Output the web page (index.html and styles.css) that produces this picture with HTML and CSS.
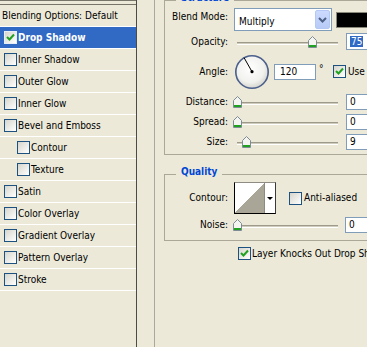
FILE: index.html
```html
<!DOCTYPE html>
<html lang="en">
<head>
  <meta charset="UTF-8">
  <title>Layer Style</title>
  <link rel="stylesheet" href="styles.css">
</head>
<body>
<div class="dialog">

  <!-- Styles list -->
  <aside class="styles">
    <div class="styles-top"></div>
    <div class="item head">Blending Options: Default</div>
    <div class="item selected">
      <span class="cb"><svg width="11" height="11" viewBox="0 0 11 11"><path d="M2 5 L4.5 7.5 L9 2.5" fill="none" stroke="#21A121" stroke-width="2"/></svg></span>Drop Shadow
    </div>
    <div class="item"><span class="cb"></span>Inner Shadow</div>
    <div class="item"><span class="cb"></span>Outer Glow</div>
    <div class="item"><span class="cb"></span>Inner Glow</div>
    <div class="item"><span class="cb"></span>Bevel and Emboss</div>
    <div class="item sub"><span class="cb"></span>Contour</div>
    <div class="item sub"><span class="cb"></span>Texture</div>
    <div class="item"><span class="cb"></span>Satin</div>
    <div class="item"><span class="cb"></span>Color Overlay</div>
    <div class="item"><span class="cb"></span>Gradient Overlay</div>
    <div class="item"><span class="cb"></span>Pattern Overlay</div>
    <div class="item"><span class="cb"></span>Stroke</div>
  </aside>

  <!-- Settings -->
  <main class="panel">
    <div class="outer">

      <section class="group structure">
        <div class="group-title">Structure</div>

        <div class="row blend">
          <span class="label">Blend Mode:</span>
          <div class="select">
            <span class="select-text">Multiply</span>
            <span class="select-btn"><svg width="9" height="6" viewBox="0 0 9 6"><path d="M1 1 L4.5 4.5 L8 1" fill="none" stroke="#4D6185" stroke-width="2"/></svg></span>
          </div>
          <span class="swatch"></span>
        </div>

        <div class="row opacity">
          <span class="label">Opacity:</span>
          <div class="slider">
            <div class="track"></div>
            <svg class="thumb" style="left:71px" width="9" height="12" viewBox="0 0 9 12"><path d="M0.5 4.5 L4.5 0.5 L8.5 4.5 V11.5 H0.5 Z" fill="#F4F4F0" stroke="#7E8C96"/><rect x="1" y="9" width="7" height="2" fill="#21A121"/></svg>
          </div>
          <div class="num"><span class="sel">75</span></div>
        </div>

        <div class="row angle">
          <span class="label">Angle:</span>
          <svg class="dial" width="36" height="36" viewBox="0 0 36 36">
            <defs>
              <radialGradient id="dialFill" cx="45%" cy="40%" r="60%">
                <stop offset="0" stop-color="#FFFFFF"/>
                <stop offset="0.7" stop-color="#F1F1EE"/>
                <stop offset="1" stop-color="#D6D5CE"/>
              </radialGradient>
            </defs>
            <circle cx="18" cy="18" r="16.2" fill="url(#dialFill)" stroke="#4A5F8C" stroke-width="1.6"/>
            <line x1="18" y1="17.7" x2="10" y2="3.6" stroke="#000" stroke-width="1"/>
            <circle cx="18" cy="17.7" r="1.6" fill="#000"/>
          </svg>
          <div class="num angle-num">120</div>
          <span class="deg">°</span>
          <span class="cb use-cb"><svg width="11" height="11" viewBox="0 0 11 11"><path d="M2 5 L4.5 7.5 L9 2.5" fill="none" stroke="#21A121" stroke-width="2"/></svg></span>
          <span class="cb-text">Use Global Light</span>
        </div>

        <div class="row slide first">
          <span class="label">Distance:</span>
          <div class="slider">
            <div class="track"></div>
            <svg class="thumb" style="left:-4px" width="9" height="12" viewBox="0 0 9 12"><path d="M0.5 4.5 L4.5 0.5 L8.5 4.5 V11.5 H0.5 Z" fill="#F4F4F0" stroke="#7E8C96"/><rect x="1" y="9" width="7" height="2" fill="#21A121"/></svg>
          </div>
          <div class="num">0</div>
        </div>

        <div class="row slide">
          <span class="label">Spread:</span>
          <div class="slider">
            <div class="track"></div>
            <svg class="thumb" style="left:-4px" width="9" height="12" viewBox="0 0 9 12"><path d="M0.5 4.5 L4.5 0.5 L8.5 4.5 V11.5 H0.5 Z" fill="#F4F4F0" stroke="#7E8C96"/><rect x="1" y="9" width="7" height="2" fill="#21A121"/></svg>
          </div>
          <div class="num">0</div>
        </div>

        <div class="row slide">
          <span class="label">Size:</span>
          <div class="slider">
            <div class="track"></div>
            <svg class="thumb" style="left:5px" width="9" height="12" viewBox="0 0 9 12"><path d="M0.5 4.5 L4.5 0.5 L8.5 4.5 V11.5 H0.5 Z" fill="#F4F4F0" stroke="#7E8C96"/><rect x="1" y="9" width="7" height="2" fill="#21A121"/></svg>
          </div>
          <div class="num">9</div>
        </div>
      </section>

      <section class="group quality">
        <div class="group-title">Quality</div>

        <div class="row contour-row">
          <span class="label">Contour:</span>
          <div class="contour">
            <span class="curve"></span>
            <span class="curve-arrow"></span>
          </div>
          <span class="cb aa-cb"></span>
          <span class="cb-text">Anti-aliased</span>
        </div>

        <div class="row noise">
          <span class="label">Noise:</span>
          <div class="slider">
            <div class="track"></div>
            <svg class="thumb" style="left:-4px" width="9" height="12" viewBox="0 0 9 12"><path d="M0.5 4.5 L4.5 0.5 L8.5 4.5 V11.5 H0.5 Z" fill="#F4F4F0" stroke="#7E8C96"/><rect x="1" y="9" width="7" height="2" fill="#21A121"/></svg>
          </div>
          <div class="num">0</div>
        </div>
      </section>

      <div class="row knock">
        <span class="cb"><svg width="11" height="11" viewBox="0 0 11 11"><path d="M2 5 L4.5 7.5 L9 2.5" fill="none" stroke="#21A121" stroke-width="2"/></svg></span>
        <span class="cb-text">Layer Knocks Out Drop Shadow</span>
      </div>

    </div>
  </main>

</div>
</body>
</html>
```

FILE: styles.css
```css
/* RESET */
* {
  margin: 0;
  padding: 0;
  box-sizing: border-box;
}

body {
  background: #ECE9D8;
  color: #000;
  font-family: "DejaVu Sans Condensed", "Liberation Sans", sans-serif;
  font-size: 10px;
  line-height: 12px;
  width: 367px;
  height: 347px;
  overflow: hidden;
}

.dialog {
  display: flex;
  height: 347px;
}

/* CHECKBOX */
.cb {
  display: inline-flex;
  align-items: center;
  justify-content: center;
  flex-shrink: 0;
  width: 13px;
  height: 13px;
  border: 1px solid #1C5180;
  background: linear-gradient(135deg, #D6D5CC, #FFFFFF);
}

.cb-text {
  margin-left: 2px;
  white-space: nowrap;
}

/* STYLES LIST */
.styles {
  flex: 0 0 137px;
  border-right: 1px solid #4B4B4B;
}

.styles-top {
  height: 5px;
  border-top: 1px solid #77756A;
  border-bottom: 1px solid #77756A;
}

.item {
  display: flex;
  align-items: center;
  height: 22px;
  border-bottom: 1px solid #fff;
  padding-left: 4px;
  white-space: nowrap;
}

.item .cb {
  margin-right: 1px;
}

.item.head {
  padding-left: 2px;
}

.item.sub {
  padding-left: 17px;
}

.item.selected {
  background: #316AC5;
  color: #fff;
  font-weight: bold;
}

.item.selected .cb {
  border-color: #E8EEF8;
}

/* SETTINGS PANEL */
.panel {
  flex: 0 0 260px;
  padding-left: 17px;
}

.outer {
  height: 100%;
  border-left: 1px solid #ACA899;
  padding-left: 9px;
}

.group {
  border: 1px solid #ACA899;
}

.group-title {
  width: fit-content;
  margin: -9px 0 0 11px;
  padding: 0 5px;
  background: #ECE9D8;
  color: #0046D5;
  font-weight: bold;
}

.structure {
  padding-bottom: 2px;
}

.quality {
  margin-top: 19px;
  padding-bottom: 6px;
}

.row {
  display: flex;
  align-items: center;
  white-space: nowrap;
}

.label {
  flex-shrink: 0;
  width: 63px;
  margin-right: 6px;
  text-align: right;
}

/* blend mode */
.blend {
  margin-top: 4px;
  height: 23px;
}

.blend .label {
  padding-bottom: 5px;
}

.select {
  display: flex;
  width: 98px;
  height: 23px;
  padding: 1px;
  border: 1px solid #7F9DB9;
  background: #fff;
}

.select-text {
  flex: 1;
  padding: 2px 0 0 3px;
  line-height: 19px;
}

.select-btn {
  display: flex;
  align-items: center;
  justify-content: center;
  width: 15px;
  border: 1px solid #B4C8F5;
  border-radius: 2px;
  background: linear-gradient(#CCDAFD, #B7CBF7);
}

.swatch {
  width: 40px;
  height: 16px;
  margin-left: 4px;
  border: 1px solid #8A877B;
  background: #000;
}

/* sliders */
.opacity {
  margin-top: 1px;
  height: 19px;
}

.angle {
  margin-top: 2px;
  height: 37px;
}

.slide {
  height: 20px;
}

.slide.first {
  margin-top: 2px;
}

.slider {
  position: relative;
  flex-shrink: 0;
  width: 101px;
  height: 12px;
  margin-left: 3px;
}

.track {
  margin-top: 6px;
  height: 3px;
  border-top: 1px solid #9D9A8C;
  border-bottom: 1px solid #fff;
  background: #CFCCBD;
}

.thumb {
  position: absolute;
  top: 0;
}

.num {
  flex-shrink: 0;
  width: 40px;
  height: 16px;
  margin-left: 8px;
  padding-left: 3px;
  border: 1px solid #7F9DB9;
  background: #fff;
  line-height: 14px;
}

.opacity .num {
  height: 17px;
  line-height: 15px;
}

.sel {
  padding: 0 1px;
  background: #316AC5;
  color: #fff;
}

/* angle */
.dial {
  flex-shrink: 0;
}

.num.angle-num {
  width: 42px;
  margin-left: 4px;
  padding-left: 5px;
}

.deg {
  width: 6px;
  margin-left: 3px;
  padding-bottom: 6px;
}

.use-cb {
  margin-left: 8px;
}

/* quality */
.contour-row {
  margin-top: 4px;
  height: 32px;
}

.contour {
  display: flex;
  width: 42px;
  height: 32px;
  border: 1px solid;
  border-color: #8E8C83 #3A3A3A #000 #000;
  background: #fff;
}

.curve {
  width: 30px;
  border-right: 1px solid #8D8B80;
  background: linear-gradient(to top left, #A9A597 50%, #fff 50%);
}

.curve-arrow {
  flex: 1;
  display: flex;
  align-items: center;
  justify-content: center;
}

.curve-arrow::before {
  content: "";
  border-left: 3px solid transparent;
  border-right: 3px solid transparent;
  border-top: 3px solid #000;
}

.aa-cb {
  margin-left: 13px;
}

.noise {
  margin-top: 2px;
  height: 18px;
}

.noise .num {
  margin-left: 7px;
}

/* knock out */
.knock {
  margin: 6px 0 0 74px;
  height: 13px;
}

.knock .cb-text {
  margin-left: 1px;
}
```
